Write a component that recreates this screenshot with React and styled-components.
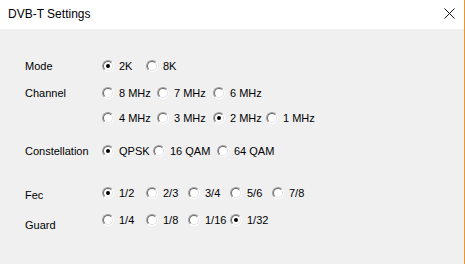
import React from "react";
import styled, { createGlobalStyle } from "styled-components";

const GlobalStyle = createGlobalStyle`
  html, body {
    margin: 0;
    padding: 0;
    background: #f0f0f0;
  }
  * { box-sizing: border-box; }
`;

const rows = [
  { label: "Mode", top: 30, options: [["2K", 44], ["8K"]], checked: 0 },
  {
    label: "Channel",
    top: 13,
    options: [["8 MHz", 55], ["7 MHz", 56], ["6 MHz"]],
    checked: -1,
  },
  {
    label: "",
    top: 11,
    options: [["4 MHz", 55], ["3 MHz", 56], ["2 MHz", 53], ["1 MHz"]],
    checked: 2,
  },
  {
    label: "Constellation",
    top: 19,
    options: [["QPSK", 51], ["16 QAM", 64], ["64 QAM"]],
    checked: 0,
  },
  {
    label: "Fec",
    top: 28,
    drop: 2,
    options: [["1/2", 44], ["2/3", 42], ["3/4", 42], ["5/6", 42], ["7/8"]],
    checked: 0,
  },
  {
    label: "Guard",
    top: 13,
    drop: 5,
    options: [["1/4", 44], ["1/8", 42], ["1/16", 42], ["1/32"]],
    checked: 3,
  },
];

export default function App() {
  return (
    <>
      <GlobalStyle />
      <Window>
        <TitleBar>
          <Title>DVB-T Settings</Title>
          <CloseButton aria-label="Close">
            <svg width="11" height="11" viewBox="0 0 11 11">
              <path d="M0.5 0.5 L10.5 10.5 M10.5 0.5 L0.5 10.5" stroke="#111" strokeWidth="1" fill="none" />
            </svg>
          </CloseButton>
        </TitleBar>
        <Body>
          {rows.map((row, i) => (
            <Row key={i} $top={row.top}>
              <Label $drop={row.drop || 0}>{row.label}</Label>
              <Options>
                {row.options.map(([text, width], j) => (
                  <Option key={text} $width={width}>
                    <Radio>
                      <RadioInner>{row.checked === j && <Dot />}</RadioInner>
                    </Radio>
                    <OptionText>{text}</OptionText>
                  </Option>
                ))}
              </Options>
            </Row>
          ))}
        </Body>
      </Window>
    </>
  );
}

const Window = styled.div`
  width: 465px;
  height: 264px;
  background: #f0f0f0;
  border-right: 1px solid #e8962f;
  display: flex;
  flex-direction: column;
  overflow: hidden;
`;

const TitleBar = styled.div`
  height: 29px;
  flex-shrink: 0;
  background: #ffffff;
  display: flex;
  align-items: center;
  justify-content: space-between;
  padding: 0 9px 1px 8px;
`;

const Title = styled.div`
  font-family: "Liberation Sans", Arial, sans-serif;
  font-size: 12px;
  color: #000;
`;

const CloseButton = styled.div`
  width: 11px;
  height: 11px;
  display: flex;
  margin-bottom: 1px;
`;

const Body = styled.div`
  display: flex;
  flex-direction: column;
  padding-left: 25px;
  font-family: "Liberation Sans", Tahoma, Arial, sans-serif;
  font-size: 11px;
  color: #000;
`;

const Row = styled.div`
  display: grid;
  grid-template-columns: 77px 1fr;
  align-items: center;
  height: 14px;
  margin-top: ${(p) => p.$top}px;
`;

const Label = styled.div`
  position: relative;
  top: ${(p) => p.$drop}px;
  white-space: nowrap;
`;

const Options = styled.div`
  display: flex;
  align-items: center;
`;

const Option = styled.div`
  display: flex;
  align-items: center;
  width: ${(p) => (p.$width ? `${p.$width}px` : "auto")};
  flex-shrink: 0;
`;

const Radio = styled.span`
  width: 12px;
  height: 12px;
  border-radius: 50%;
  border: 1px solid;
  border-color: #a0a0a0 #ffffff #ffffff #a0a0a0;
  display: flex;
  flex-shrink: 0;
`;

const RadioInner = styled.span`
  flex: 1;
  border-radius: 50%;
  border: 1px solid;
  border-color: #696969 #e3e3e3 #e3e3e3 #696969;
  background: #ffffff;
  display: flex;
  align-items: center;
  justify-content: center;
`;

const Dot = styled.span`
  width: 4px;
  height: 4px;
  border-radius: 50%;
  background: #000;
`;

const OptionText = styled.span`
  margin-left: 5px;
  white-space: nowrap;
`;
